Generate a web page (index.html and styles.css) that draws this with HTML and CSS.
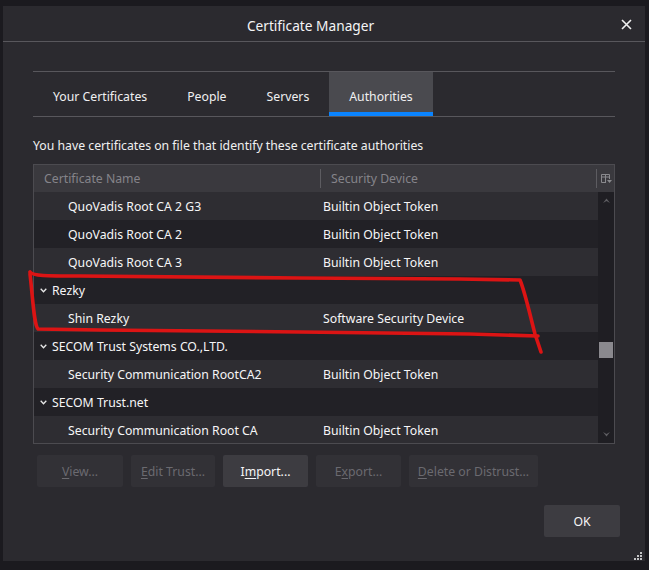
FILE: index.html
```html
<!DOCTYPE html>
<html>
<head>
<meta charset="utf-8">
<link rel="stylesheet" href="styles.css">
</head>
<body>
<div class="dialog">
  <div class="titlebar">
    <div class="title">Certificate Manager</div>
    <div class="close">
      <svg width="11" height="11" viewBox="0 0 11 11"><path d="M1 1 L10 10 M10 1 L1 10" stroke="#f0f0f0" stroke-width="1.6" fill="none"/></svg>
    </div>
  </div>
  <div class="content">
    <div class="tabs">
      <div class="tab">Your Certificates</div>
      <div class="tab">People</div>
      <div class="tab">Servers</div>
      <div class="tab active">Authorities</div>
    </div>
    <div class="desc">You have certificates on file that identify these certificate authorities</div>
    <div class="tree">
      <div class="tree-head">
        <div class="hcell name-col">Certificate Name</div>
        <div class="hcell dev-col">Security Device</div>
        <div class="picker">
          <svg width="11" height="10" viewBox="0 0 11 10"><path d="M0.5 0.5 H8.5 V5 M0.5 0.5 V8.5 H5 M0.5 3 H8.5 M4.5 0.5 V8.5" stroke="#8a8a8e" fill="none"/><path d="M6 6 H11 L8.5 9 Z" fill="#8a8a8e"/></svg>
        </div>
      </div>
      <div class="tree-body">
        <div class="rows">
          <div class="row light"><div class="cell name-col child">QuoVadis Root CA 2 G3</div><div class="cell dev">Builtin Object Token</div></div>
          <div class="row dark"><div class="cell name-col child">QuoVadis Root CA 2</div><div class="cell dev">Builtin Object Token</div></div>
          <div class="row light"><div class="cell name-col child">QuoVadis Root CA 3</div><div class="cell dev">Builtin Object Token</div></div>
          <div class="row dark"><div class="cell name-col group"><svg class="chev" width="7" height="5" viewBox="0 0 7 5"><path d="M0.7 0.8 L3.5 3.8 L6.3 0.8" stroke="#e8e8e8" stroke-width="1.3" fill="none"/></svg>Rezky</div><div class="cell dev"></div></div>
          <div class="row light"><div class="cell name-col child">Shin Rezky</div><div class="cell dev">Software Security Device</div></div>
          <div class="row dark"><div class="cell name-col group"><svg class="chev" width="7" height="5" viewBox="0 0 7 5"><path d="M0.7 0.8 L3.5 3.8 L6.3 0.8" stroke="#e8e8e8" stroke-width="1.3" fill="none"/></svg>SECOM Trust Systems CO.,LTD.</div><div class="cell dev"></div></div>
          <div class="row light"><div class="cell name-col child">Security Communication RootCA2</div><div class="cell dev">Builtin Object Token</div></div>
          <div class="row dark"><div class="cell name-col group"><svg class="chev" width="7" height="5" viewBox="0 0 7 5"><path d="M0.7 0.8 L3.5 3.8 L6.3 0.8" stroke="#e8e8e8" stroke-width="1.3" fill="none"/></svg>SECOM Trust.net</div><div class="cell dev"></div></div>
          <div class="row light"><div class="cell name-col child">Security Communication Root CA</div><div class="cell dev">Builtin Object Token</div></div>
        </div>
        <div class="scrollbar">
          <svg class="arrow" width="7" height="5" viewBox="0 0 7 5"><path d="M0 5 L3.5 0.5 L7 5 L3.5 3 Z" fill="#5e5e62"/></svg>
          <div class="track"><div class="thumb"></div></div>
          <svg class="arrow" width="7" height="5" viewBox="0 0 7 5"><path d="M0 0 L3.5 4.5 L7 0 L3.5 2 Z" fill="#5e5e62"/></svg>
        </div>
      </div>
    </div>
    <div class="buttons">
      <div class="btn disabled w86"><u>V</u>iew...</div>
      <div class="btn disabled w84"><u>E</u>dit Trust...</div>
      <div class="btn enabled w85">I<u>m</u>port...</div>
      <div class="btn disabled w85">E<u>x</u>port...</div>
      <div class="btn disabled w129"><u>D</u>elete or Distrust...</div>
    </div>
  </div>
  <div class="footer">
    <div class="btn enabled ok">OK</div>
  </div>
  <div class="grip">
    <span class="dot d1"></span><span class="dot d2"></span><span class="dot d3"></span>
    <span class="dot d4"></span><span class="dot d5"></span><span class="dot d6"></span>
  </div>
</div>
<svg class="annotation" width="649" height="570" viewBox="0 0 649 570">
  <path d="M30 272 C 33 276, 45 276, 80 276 L 300 278 L 460 279 L 520 280 C 525 292, 530 315, 535 334 L 541 352" stroke="#dc1414" stroke-width="3.6" fill="none" stroke-linecap="round" stroke-linejoin="round"/>
  <path d="M538 336 L 470 334 L 300 332 L 100 330 L 38 329 C 34 325, 33 300, 30 274" stroke="#dc1414" stroke-width="3.6" fill="none" stroke-linecap="round" stroke-linejoin="round"/>
</svg>
</body>
</html>
```
FILE: styles.css
```css
html, body {
  margin: 0;
  padding: 0;
}
body {
  width: 649px;
  height: 570px;
  overflow: hidden;
  position: relative;
  background: #1b1a1f;
  font-family: "Noto Sans", "Open Sans", sans-serif;
  font-size: 12.25px;
  color: #f6f6f7;
}
.dialog {
  margin: 6px 0 0 3px;
  width: 642px;
  height: 555px;
  background: #2b2a2f;
  display: flex;
  flex-direction: column;
  position: relative;
  box-sizing: border-box;
}
.titlebar {
  height: 35px;
  border-bottom: 1px solid #58575c;
  display: flex;
  align-items: center;
}
.title {
  flex: 1;
  text-align: center;
  padding-left: 7px;
  padding-top: 3px;
  font-size: 13.7px;
  color: #f4f4f5;
}
.close {
  width: 30px;
  margin-right: 4px;
  padding-top: 1px;
  display: flex;
  justify-content: center;
  align-items: center;
}
.content {
  padding: 0 30px;
  display: flex;
  flex-direction: column;
}
.tabs {
  margin-top: 29px;
  border-top: 1px solid #58575c;
  border-bottom: 1px solid #58575c;
  height: 44px;
  display: flex;
}
.tab {
  padding: 0 20px;
  display: flex;
  align-items: center;
  padding-top: 4px;
  box-sizing: border-box;
  color: #f0f0f1;
}
.tab.active {
  background: #4a4a4f;
  box-shadow: inset 0 -4px 0 #0a84ff;
}
.desc {
  margin-top: 20px;
  line-height: 17px;
  color: #f0f0f1;
}
.tree {
  margin-top: 10px;
  height: 280px;
  box-sizing: border-box;
  border: 1px solid #4c4b50;
  display: flex;
  flex-direction: column;
  overflow: hidden;
}
.tree-head {
  height: 27px;
  flex: none;
  background: #3a393e;
  display: flex;
  align-items: center;
  color: #85848a;
}
.hcell {
  height: 100%;
  display: flex;
  align-items: center;
  box-sizing: border-box;
}
.name-col {
  width: 287px;
  flex: none;
}
.tree-head .name-col {
  padding-left: 10px;
  border-right: 1px solid #5d5c61;
  height: 19px;
}
.tree-head .dev-col {
  flex: 1;
  padding-left: 10px;
}
.picker {
  width: 15px;
  height: 19px;
  border-left: 1px solid #5d5c61;
  display: flex;
  align-items: center;
  justify-content: center;
  padding-left: 2px;
}
.tree-body {
  flex: 1;
  display: flex;
  overflow: hidden;
}
.rows {
  flex: 1;
  overflow: hidden;
}
.row {
  height: 28px;
  display: flex;
  align-items: center;
}
.row.light {
  background: #2e2d32;
}
.row.dark {
  background: #222126;
}
.cell {
  display: flex;
  align-items: center;
  white-space: nowrap;
}
.child {
  padding-left: 34px;
  box-sizing: border-box;
}
.group {
  padding-left: 6px;
  box-sizing: border-box;
}
.chev {
  margin-right: 5px;
  margin-top: 1px;
}
.dev {
  padding-left: 2px;
}
.scrollbar {
  width: 16px;
  flex: none;
  background: #1f1e23;
  display: flex;
  flex-direction: column;
  align-items: center;
  padding: 6px 0 6px;
  box-sizing: border-box;
}
.track {
  flex: 1;
  width: 100%;
  position: relative;
}
.thumb {
  margin-top: 139px;
  margin-left: 1px;
  width: 14px;
  height: 16px;
  background: #8a898e;
}
.buttons {
  margin-top: 11px;
  padding-left: 4px;
  display: flex;
  gap: 8px;
}
.btn {
  height: 32px;
  border-radius: 2px;
  display: flex;
  align-items: center;
  justify-content: center;
  box-sizing: border-box;
}
.btn.disabled {
  background: #323136;
  color: #6b6a70;
}
.btn.enabled {
  background: #3d3c41;
  color: #f6f6f7;
}
.btn u {
  text-underline-offset: 2px;
}
.w84 { width: 84px; }
.w85 { width: 85px; }
.w86 { width: 86px; }
.w129 { width: 129px; }
.footer {
  margin-top: 18px;
  padding-right: 25px;
  display: flex;
  justify-content: flex-end;
}
.ok {
  width: 76px;
}
.grip {
  position: absolute;
  right: 3px;
  bottom: 1px;
  width: 8px;
  height: 8px;
}
.dot {
  position: absolute;
  width: 2px;
  height: 2px;
  background: #c4c4c6;
}
.d1 { right: 0; top: 0; }
.d2 { right: 0; top: 3px; }
.d3 { right: 3px; top: 3px; }
.d4 { right: 0; top: 6px; }
.d5 { right: 3px; top: 6px; }
.d6 { right: 6px; top: 6px; }
.annotation {
  position: absolute;
  left: 0;
  top: 0;
  pointer-events: none;
}
```
